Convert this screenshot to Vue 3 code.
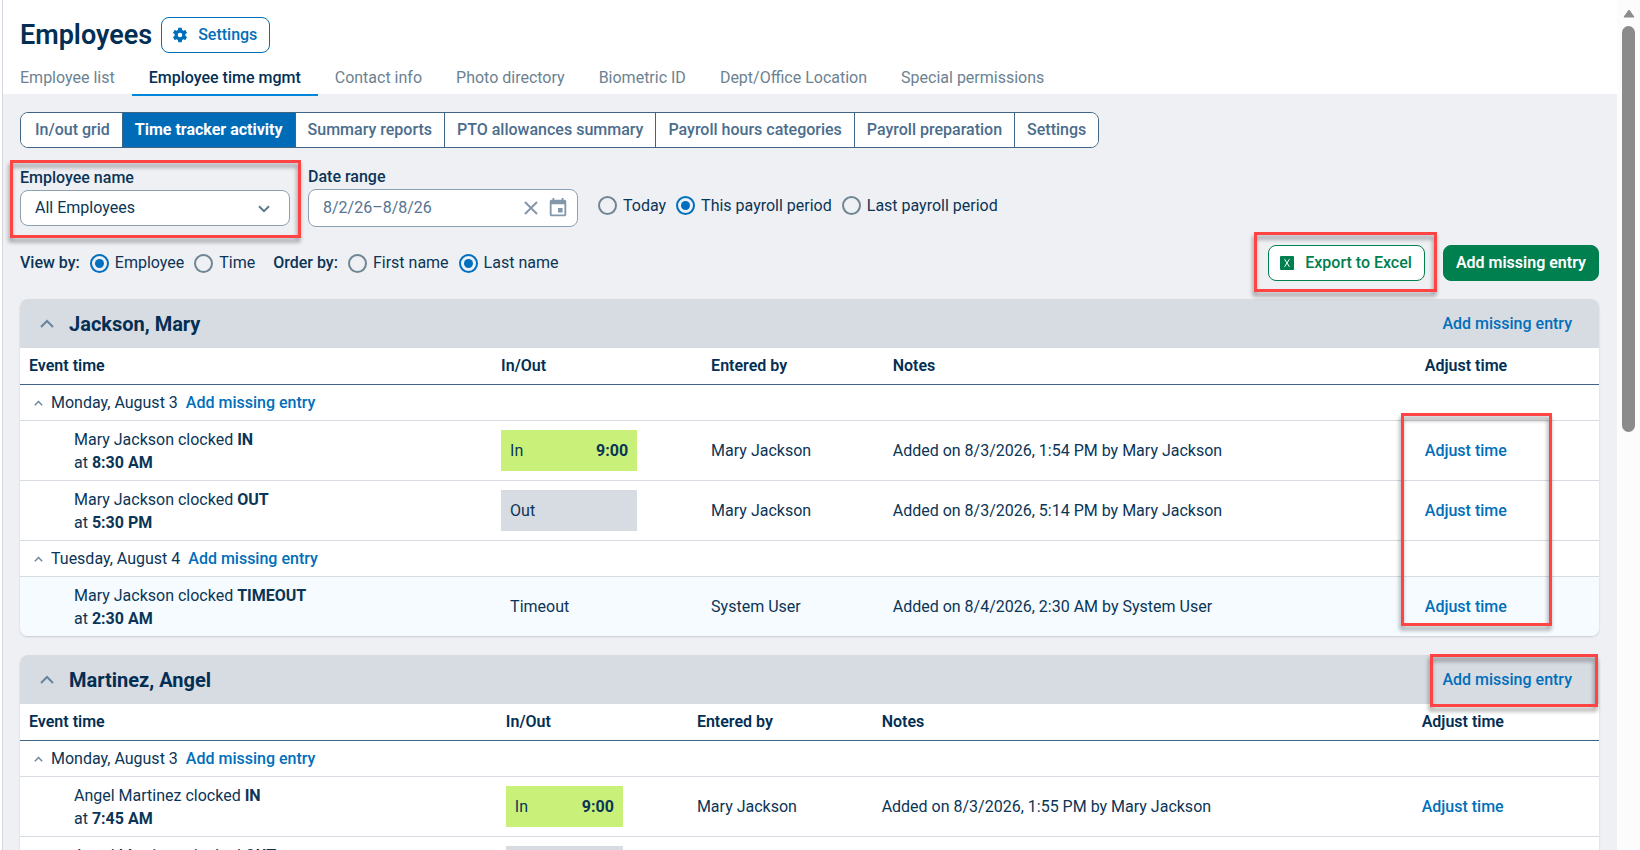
<script setup>
import { ref } from 'vue'

const tabs = [
  'Employee list',
  'Employee time mgmt',
  'Contact info',
  'Photo directory',
  'Biometric ID',
  'Dept/Office Location',
  'Special permissions'
]
const activeTab = ref('Employee time mgmt')

const views = [
  'In/out grid',
  'Time tracker activity',
  'Summary reports',
  'PTO allowances summary',
  'Payroll hours categories',
  'Payroll preparation',
  'Settings'
]
const activeView = ref('Time tracker activity')

const employee = ref('All Employees')
const dateRange = ref('8/2/26–8/8/26')
const periods = ['Today', 'This payroll period', 'Last payroll period']
const period = ref('This payroll period')
const viewBy = ref('Employee')
const orderBy = ref('Last name')

const columns = ['Event time', 'In/Out', 'Entered by', 'Notes', 'Adjust time']

const employees = [
  {
    name: 'Jackson, Mary',
    widths: [29.9, 13.3, 11.5, 33.7, 11.6],
    markRows: true,
    days: [
      {
        date: 'Monday, August 3',
        events: [
          { who: 'Mary Jackson', type: 'IN', time: '8:30 AM', status: 'In', hours: '9:00', by: 'Mary Jackson', notes: 'Added on 8/3/2026, 1:54 PM by Mary Jackson' },
          { who: 'Mary Jackson', type: 'OUT', time: '5:30 PM', status: 'Out', by: 'Mary Jackson', notes: 'Added on 8/3/2026, 5:14 PM by Mary Jackson' }
        ]
      },
      {
        date: 'Tuesday, August 4',
        events: [
          { who: 'Mary Jackson', type: 'TIMEOUT', time: '2:30 AM', status: 'Timeout', by: 'System User', notes: 'Added on 8/4/2026, 2:30 AM by System User' }
        ]
      }
    ]
  },
  {
    name: 'Martinez, Angel',
    widths: [30.2, 12.1, 11.7, 34.2, 11.8],
    markHeader: true,
    days: [
      {
        date: 'Monday, August 3',
        events: [
          { who: 'Angel Martinez', type: 'IN', time: '7:45 AM', status: 'In', hours: '9:00', by: 'Mary Jackson', notes: 'Added on 8/3/2026, 1:55 PM by Mary Jackson' },
          { who: 'Angel Martinez', type: 'OUT', time: '4:45 PM', status: 'Out', by: 'Mary Jackson', notes: 'Added on 8/3/2026, 4:45 PM by Mary Jackson' }
        ]
      }
    ]
  }
]
</script>

<template>
  <div class="app">
    <div class="rail"></div>

    <div class="page">
      <header class="page-header">
        <div class="title-row">
          <h1>Employees</h1>
          <button type="button" class="btn btn-blue">
            <svg class="gear" viewBox="0 0 24 24" aria-hidden="true">
              <path d="M19.14 12.94c.04-.3.06-.61.06-.94s-.02-.64-.07-.94l2.03-1.58a.49.49 0 0 0 .12-.61l-1.92-3.32a.49.49 0 0 0-.59-.22l-2.39.96a7 7 0 0 0-1.62-.94l-.36-2.54a.48.48 0 0 0-.48-.41h-3.84c-.24 0-.43.17-.47.41l-.36 2.54c-.59.24-1.13.57-1.62.94l-2.39-.96a.49.49 0 0 0-.59.22L2.74 8.87c-.12.21-.08.47.12.61l2.03 1.58c-.05.3-.09.63-.09.94s.02.64.07.94l-2.03 1.58a.49.49 0 0 0-.12.61l1.92 3.32c.12.22.37.29.59.22l2.39-.96c.5.38 1.03.7 1.62.94l.36 2.54c.05.24.24.41.48.41h3.84c.24 0 .44-.17.47-.41l.36-2.54c.59-.24 1.13-.56 1.62-.94l2.39.96c.22.08.47 0 .59-.22l1.92-3.32a.49.49 0 0 0-.12-.61zM12 15a3 3 0 1 1 0-6 3 3 0 0 1 0 6z" />
            </svg>
            Settings
          </button>
        </div>
        <nav class="tabs">
          <a
            v-for="tab in tabs"
            :key="tab"
            href="#"
            :class="['tab', { active: activeTab === tab }]"
            @click.prevent="activeTab = tab"
          >{{ tab }}</a>
        </nav>
      </header>

      <main class="content">
        <div class="segments">
          <button
            v-for="view in views"
            :key="view"
            type="button"
            :class="['segment', { active: activeView === view }]"
            @click="activeView = view"
          >{{ view }}</button>
        </div>

        <div class="filters">
          <div class="field field-name">
            <label for="employee">Employee name</label>
            <div class="control">
              <select id="employee" v-model="employee">
                <option>All Employees</option>
                <option>Jackson, Mary</option>
                <option>Martinez, Angel</option>
              </select>
              <svg class="caret" viewBox="0 0 12 8" aria-hidden="true">
                <path d="M1 1.2 6 6.2l5-5" />
              </svg>
            </div>
            <div class="mark mark-field"></div>
          </div>

          <div class="field field-date">
            <label for="range">Date range</label>
            <div class="control date-control">
              <input id="range" v-model="dateRange" type="text" />
              <button type="button" class="icon-btn" aria-label="Clear" @click="dateRange = ''">
                <svg class="clear" viewBox="0 0 14 14" aria-hidden="true">
                  <path d="M1 1l12 12M13 1 1 13" />
                </svg>
              </button>
              <button type="button" class="icon-btn" aria-label="Open calendar">
                <svg class="calendar" viewBox="0 0 24 24" aria-hidden="true">
                  <path d="M17 12h-5v5h5v-5zM16 1v2H8V1H6v2H5c-1.110 0-1.990.9-1.990 2L3 19c0 1.100.89 2 2 2h14c1.100 0 2-.9 2-2V5c0-1.100-.9-2-2-2h-1V1h-2zm3 18H5V8h14v11z" />
                </svg>
              </button>
            </div>
          </div>

          <div class="radios period">
            <label v-for="p in periods" :key="p" class="radio">
              <input v-model="period" type="radio" name="period" :value="p" />
              {{ p }}
            </label>
          </div>
        </div>

        <div class="options">
          <div class="radios">
            <span class="legend">View by:</span>
            <label v-for="v in ['Employee', 'Time']" :key="v" class="radio">
              <input v-model="viewBy" type="radio" name="view-by" :value="v" />
              {{ v }}
            </label>
          </div>
          <div class="radios">
            <span class="legend">Order by:</span>
            <label v-for="o in ['First name', 'Last name']" :key="o" class="radio">
              <input v-model="orderBy" type="radio" name="order-by" :value="o" />
              {{ o }}
            </label>
          </div>
          <div class="actions">
            <div class="export">
              <button type="button" class="btn btn-green">
                <svg class="excel" viewBox="0 0 14 14" aria-hidden="true">
                  <rect width="14" height="14" rx="1" />
                  <path d="M4.600 3.200l4.800 7.600M9.400 3.200l-4.800 7.600" />
                </svg>
                Export to Excel
              </button>
              <div class="mark mark-export"></div>
            </div>
            <button type="button" class="btn btn-solid">Add missing entry</button>
          </div>
        </div>

        <section v-for="emp in employees" :key="emp.name" class="card">
          <div class="card-header">
            <button type="button" class="icon-btn card-toggle" :aria-label="'Collapse ' + emp.name">
              <svg viewBox="0 0 14 9" aria-hidden="true"><path d="M1 8l6-6 6 6" /></svg>
            </button>
            <h2>{{ emp.name }}</h2>
            <a href="#" class="link">Add missing entry</a>
            <div v-if="emp.markHeader" class="mark mark-header"></div>
          </div>
          <table>
            <colgroup>
              <col v-for="(w, i) in emp.widths" :key="i" :style="{ width: w + '%' }" />
            </colgroup>
            <thead>
              <tr>
                <th v-for="col in columns" :key="col" scope="col">{{ col }}</th>
              </tr>
            </thead>
            <tbody v-for="day in emp.days" :key="day.date">
              <tr class="day">
                <td colspan="5">
                  <div class="day-line">
                    <button type="button" class="icon-btn day-toggle" :aria-label="'Collapse ' + day.date">
                      <svg viewBox="0 0 9 6" aria-hidden="true"><path d="M.8 5.200 4.500 1.400l3.700 3.800" /></svg>
                    </button>
                    <span>{{ day.date }}</span>
                    <a href="#" class="link">Add missing entry</a>
                  </div>
                </td>
              </tr>
              <tr
                v-for="ev in day.events"
                :key="ev.time"
                :class="['event', { timeout: ev.status === 'Timeout' }]"
              >
                <td class="what">
                  {{ ev.who }} clocked <strong>{{ ev.type }}</strong><br />
                  at <strong>{{ ev.time }}</strong>
                </td>
                <td class="status">
                  <div :class="['chip', 'chip-' + ev.status.toLowerCase()]">
                    <span>{{ ev.status }}</span>
                    <strong v-if="ev.hours">{{ ev.hours }}</strong>
                  </div>
                </td>
                <td>{{ ev.by }}</td>
                <td>{{ ev.notes }}</td>
                <td><a href="#" class="link">Adjust time</a></td>
              </tr>
            </tbody>
          </table>
          <div v-if="emp.markRows" class="mark mark-rows"></div>
        </section>
      </main>
    </div>

    <div class="scrollbar">
      <svg viewBox="0 0 12 9" aria-hidden="true"><path d="M6 1 11 8H1z" /></svg>
      <div class="thumb"></div>
    </div>
  </div>
</template>

<style>
body {
  margin: 0;
}
</style>

<style scoped>
.app {
  display: grid;
  grid-template-columns: 3px minmax(0, 1fr) 23px;
  height: 100vh;
  overflow: hidden;
  background: #eff0f4;
  color: #0b3556;
  font-family: Roboto, "Liberation Sans", sans-serif;
  font-size: 16px;
  line-height: 22px;
}

.app *,
.app *::before {
  box-sizing: border-box;
}

.rail {
  background: #fff;
  border-right: 1px solid #d3d6dc;
}

.page {
  overflow: hidden;
}

button,
input,
select {
  font: inherit;
  color: inherit;
}

button {
  cursor: pointer;
}

svg {
  display: block;
  flex: none;
}

strong {
  font-weight: 700;
}

/* Header */
.page-header {
  display: flow-root;
  background: #fff;
  padding: 17px 17px 0;
}

.title-row {
  display: flex;
  align-items: center;
  gap: 9px;
  height: 36px;
}

h1 {
  margin: 0;
  font-size: 27px;
  font-weight: 600;
  color: #032f54;
}

.btn {
  display: flex;
  align-items: center;
  height: 36px;
  padding: 0 12px;
  border: 1px solid;
  border-radius: 8px;
  background: #fff;
  font-weight: 500;
  white-space: nowrap;
}

.btn-blue {
  gap: 9px;
  padding-left: 9px;
  color: #006fba;
}

.gear {
  width: 18px;
  height: 18px;
  fill: currentColor;
}

.tabs {
  display: flex;
  margin: 8px 0 -2px -17px;
}

.tab {
  padding: 0 17px;
  border-bottom: 2px solid transparent;
  line-height: 33px;
  color: #6c8291;
  text-decoration: none;
  white-space: nowrap;
}

.tab.active {
  border-color: #0087dc;
  color: #032f54;
  font-weight: 500;
}

/* Filters */
.content {
  padding: 18px 18px 18px 17px;
}

.segments {
  display: flex;
  width: max-content;
  height: 36px;
  border: 1px solid #3f6486;
  border-radius: 8px;
  overflow: hidden;
}

.segment {
  padding: 0 12px;
  border: 0;
  border-left: 1px solid #3f6486;
  background: #fff;
  color: #4b6d8c;
  font-weight: 500;
}

.segment:first-child {
  padding-left: 14px;
  border-left: 0;
}

.segment.active {
  background: #006cb7;
  color: #fff;
  font-weight: 700;
}

.filters {
  display: flex;
  margin-top: 18px;
}

.field {
  position: relative;
  display: flex;
  flex-direction: column;
  width: 270px;
}

.field label {
  font-weight: 500;
}

.field-name label {
  line-height: 24px;
}

.field-date {
  gap: 1px;
  margin-left: 18px;
}

.control {
  position: relative;
}

select {
  appearance: none;
  display: block;
  width: 100%;
  height: 36px;
  padding: 0 14px;
  border: 1px solid #8ca0b3;
  border-radius: 8px;
  background: #fff;
}

.caret {
  position: absolute;
  top: 15px;
  right: 20px;
  width: 12px;
  height: 8px;
  fill: none;
  stroke: #5c7a8c;
  stroke-width: 2;
  pointer-events: none;
}

.date-control {
  display: flex;
  align-items: center;
  gap: 9px;
  height: 38px;
  padding: 0 8px 0 14px;
  border: 1px solid #8ca0b3;
  border-radius: 8px;
  background: #fff;
  color: #557491;
}

.date-control input {
  flex: 1;
  min-width: 0;
  padding: 0;
  border: 0;
  background: none;
  outline: none;
}

.icon-btn {
  padding: 0;
  border: 0;
  background: none;
}

.clear {
  width: 14px;
  height: 14px;
  fill: none;
  stroke: #8397aa;
  stroke-width: 2;
}

.calendar {
  width: 22px;
  height: 22px;
  fill: #8397aa;
}

.radios {
  display: flex;
  align-items: center;
  gap: 10px;
}

.period {
  align-self: flex-end;
  height: 43px;
  margin-left: 20px;
}

.radio {
  display: flex;
  align-items: center;
  gap: 6px;
}

.radio input {
  appearance: none;
  display: grid;
  place-items: center;
  width: 19px;
  height: 19px;
  margin: 0;
  border: 2px solid #6f8694;
  border-radius: 50%;
}

.radio input:checked {
  border-color: #006fbe;
}

.radio input:checked::before {
  content: "";
  width: 9px;
  height: 9px;
  border-radius: 50%;
  background: #006fbe;
}

.options {
  display: flex;
  align-items: center;
  gap: 18px;
  margin: 18px 0;
}

.legend {
  font-weight: 500;
}

.actions {
  display: flex;
  gap: 18px;
  margin-left: auto;
}

.export {
  position: relative;
}

.btn-green {
  gap: 11px;
  padding-left: 11px;
  color: #007f4f;
}

.btn-solid {
  border-color: #007f4f;
  background: #007f4f;
  color: #fff;
  font-weight: 600;
}

.excel {
  width: 14px;
  height: 14px;
  fill: #007f4f;
  stroke: #fff;
}

.excel rect {
  stroke: none;
}

/* Employee cards */
.card {
  position: relative;
  margin-bottom: 19px;
  border-radius: 8px;
  background: #fff;
  box-shadow: 0 1px 2px rgba(40, 60, 90, 0.2);
}

.card-header {
  position: relative;
  display: flex;
  align-items: center;
  height: 49px;
  padding: 0 27px 0 20px;
  border-radius: 8px 8px 0 0;
  background: #d7dbe2;
}

.card-toggle svg {
  width: 14px;
  height: 9px;
  fill: none;
  stroke: #6a849c;
  stroke-width: 2;
}

h2 {
  flex: 1;
  margin: 0 0 0 15px;
  font-size: 20px;
  font-weight: 700;
  color: #032f54;
}

.link {
  color: #006fba;
  font-weight: 500;
  text-decoration: none;
}

table {
  width: 100%;
  border-collapse: separate;
  border-spacing: 0;
  table-layout: fixed;
}

th {
  padding: 7px 9px;
  border-bottom: 1px solid #3f6486;
  font-weight: 600;
  text-align: left;
  color: #032f54;
}

td {
  padding: 6px 9px;
  border-bottom: 1px solid #d7dbe2;
}

.day-line {
  display: flex;
  align-items: center;
  gap: 8px;
  height: 23px;
  padding-left: 5px;
}

.day-toggle svg {
  width: 9px;
  height: 6px;
  fill: none;
  stroke: #6a849c;
  stroke-width: 1.4;
}

.what {
  padding-left: 54px;
  line-height: 23px;
}

.status {
  padding: 9px 65px 9px 9px;
}

.chip {
  display: flex;
  justify-content: space-between;
  padding: 9px;
  line-height: 23px;
}

.chip-in {
  background: #c9f179;
}

.chip-out {
  background: #d7dbe2;
}

.timeout td {
  background: #f5fbff;
}

.card tbody:last-child tr:last-child td {
  border-bottom: 0;
}

.card tbody:last-child tr:last-child td:first-child {
  border-bottom-left-radius: 8px;
}

.card tbody:last-child tr:last-child td:last-child {
  border-bottom-right-radius: 8px;
}

/* Highlight frames */
.mark {
  position: absolute;
  z-index: 1;
  border: 3px solid #ff4444;
  filter: drop-shadow(-1px 4px 2px rgba(0, 0, 0, 0.4));
  pointer-events: none;
}

.mark-field {
  inset: -6px -11px -11px -10px;
}

.mark-export {
  inset: -13px -12px -11px -14px;
}

.mark-rows {
  top: 114px;
  right: 47px;
  bottom: 10px;
  width: 151px;
}

.mark-header {
  top: -1px;
  right: 1px;
  bottom: -3px;
  width: 168px;
}

/* Scrollbar */
.scrollbar {
  display: flex;
  flex-direction: column;
  align-items: center;
  gap: 8px;
  padding-top: 9px;
  background: #fcfcfc;
}

.scrollbar svg {
  width: 12px;
  height: 9px;
  fill: #8b8b8b;
  stroke: #8b8b8b;
  stroke-linejoin: round;
}

.thumb {
  width: 13px;
  height: 406px;
  border-radius: 7px;
  background: #8b8b8b;
}
</style>
